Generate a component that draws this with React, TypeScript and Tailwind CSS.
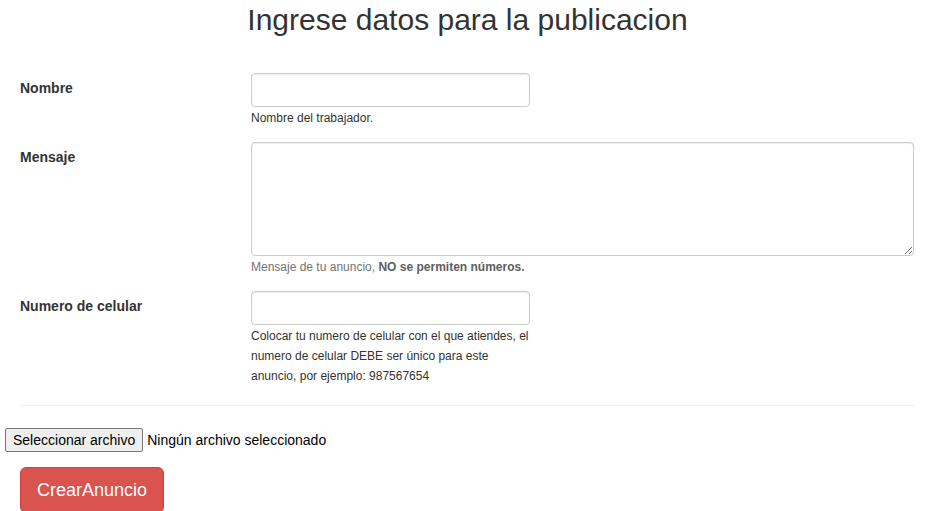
import React from "react";

export default function App() {
  return (
    <div
      className="w-[941px] bg-white text-[#333] pb-[4px]"
      style={{ fontFamily: '"Liberation Sans", Arial, sans-serif' }}
    >
      <h2 className="mt-[3px] pr-[6px] text-center text-[30px] leading-[33px] font-normal text-[#333]">
        Ingrese datos para la publicacion
      </h2>

      <div className="pl-[20px] pr-[27px]">
        {/* Nombre */}
        <div className="mt-[37px] flex">
          <label className="w-[231px] shrink-0 pt-[5px] text-[14px] font-bold leading-[20px]">
            Nombre
          </label>
          <div>
            <input
              type="text"
              className="block h-[34px] w-[279px] rounded-[4px] border border-[#ccc] bg-white px-[12px] text-[14px] shadow-[inset_0_1px_1px_rgba(0,0,0,0.075)] outline-none"
            />
            <p className="mt-[3px] text-[12px] leading-[16px] text-[#333]">
              Nombre del trabajador.
            </p>
          </div>
        </div>

        {/* Mensaje */}
        <div className="mt-[16px] flex">
          <label className="w-[231px] shrink-0 pt-[5px] text-[14px] font-bold leading-[20px]">
            Mensaje
          </label>
          <div className="flex-1">
            <textarea className="block h-[114px] w-full resize-y rounded-[4px] border border-[#ccc] bg-white px-[12px] py-[6px] text-[14px] shadow-[inset_0_1px_1px_rgba(0,0,0,0.075)] outline-none" />
            <p className="mt-[3px] text-[12px] leading-[16px] text-[#737373]">
              Mensaje de tu anuncio,{" "}
              <strong className="font-bold text-[#5e5e5e]">NO se permiten números.</strong>
            </p>
          </div>
        </div>

        {/* Numero de celular */}
        <div className="mt-[16px] flex">
          <label className="w-[231px] shrink-0 pt-[5px] text-[14px] font-bold leading-[20px]">
            Numero de celular
          </label>
          <div>
            <input
              type="text"
              className="block h-[34px] w-[279px] rounded-[4px] border border-[#ccc] bg-white px-[12px] text-[14px] shadow-[inset_0_1px_1px_rgba(0,0,0,0.075)] outline-none"
            />
            <p className="mt-[1px] w-[279px] text-[12px] leading-[20px] text-[#333]">
              Colocar tu numero de celular con el que atiendes, el numero de
              celular DEBE ser único para este anuncio, por ejemplo: 987567654
            </p>
          </div>
        </div>

        <hr className="mt-[19px] border-0 border-t border-[#eee]" />
      </div>

      {/* File input */}
      <div className="mt-[22px] flex items-center pl-[5px]">
        <button
          type="button"
          className="h-[24px] rounded-[2px] border border-[#767676] bg-[#efefef] px-[7px] text-[14px] leading-[16px] text-black"
        >
          Seleccionar archivo
        </button>
        <span className="ml-[4px] text-[14px] leading-[16px] text-black">
          Ningún archivo seleccionado
        </span>
      </div>

      <div className="pl-[20px] mt-[15px]">
        <button
          type="button"
          className="h-[46px] rounded-[6px] border border-[#d43f3a] bg-[#d9534f] px-[16px] text-[18px] leading-[24px] text-white"
        >
          CrearAnuncio
        </button>
      </div>
    </div>
  );
}
